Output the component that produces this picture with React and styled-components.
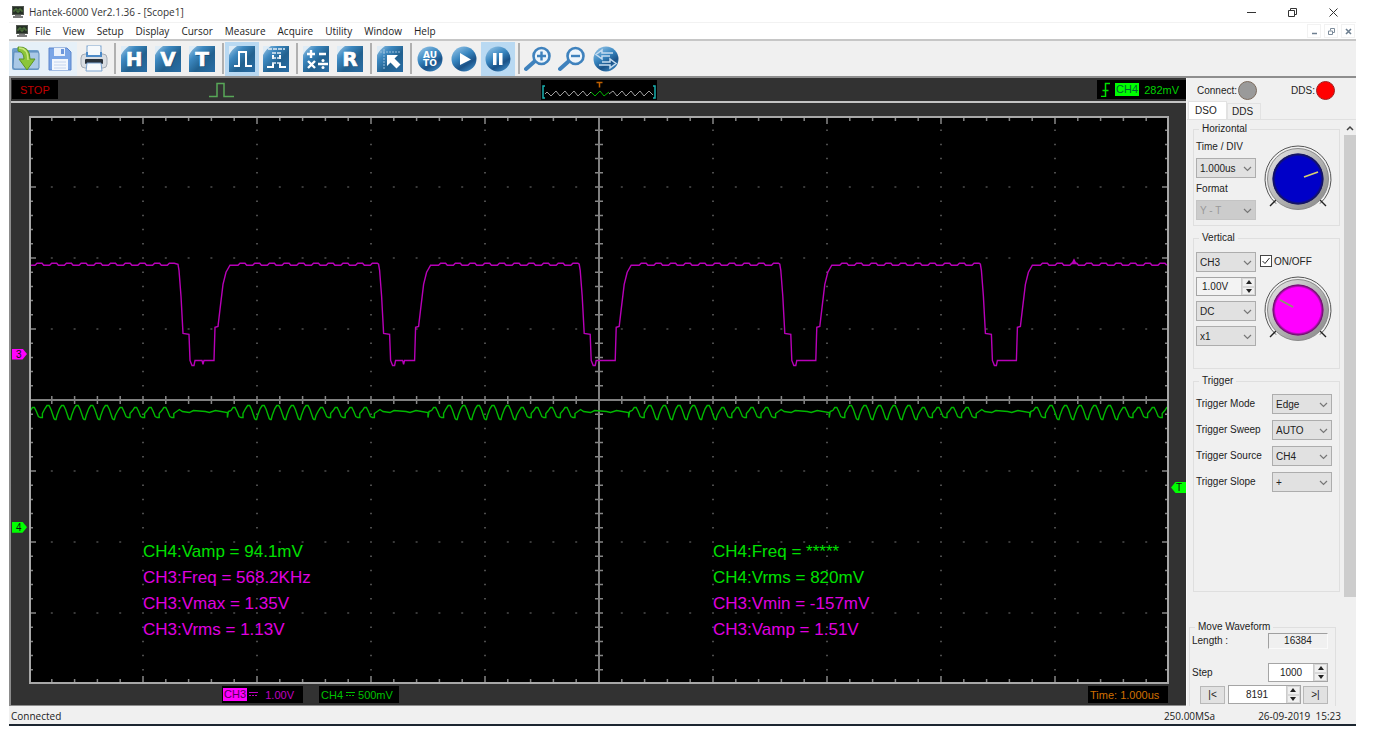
import React from "react";
import styled, { createGlobalStyle, css } from "styled-components";

const UI = '"Open Sans", "Noto Sans", sans-serif';
const ARIAL = '"Liberation Sans", Arial, sans-serif';

const Global = createGlobalStyle`
  *, *::before, *::after { box-sizing: border-box; }
  body { margin: 0; background: #fff; font-family: ${ARIAL}; font-size: 10px; color: #222; }
  button, input, select { font: inherit; color: inherit; margin: 0; padding: 0; }
`;

/* ---------- window frame ---------- */
const Page = styled.div`
  height: 100vh;
  min-height: 640px;
  padding: 0 17px 19px 9px;
`;
const Window = styled.div`
  display: flex;
  flex-direction: column;
  height: 100%;
  background: #f0f0f0;
  border-bottom: 2px solid #1c2630;
`;
const TitleBar = styled.header`
  display: flex;
  align-items: center;
  gap: 5px;
  height: 23px;
  padding: 2px 14px 0 3px;
  background: #fff;
  border-bottom: 1px solid #f2f2f2;
  font-family: ${UI};
`;
const Title = styled.h1`
  flex: 1;
  margin: 0;
  font-size: 10px;
  font-weight: 400;
  color: #333;
`;
const CaptionButtons = styled.div`
  display: flex;
  align-items: center;
  gap: ${(p) => p.$gap}px;
`;
const CaptionButton = styled.button`
  display: flex;
  align-items: center;
  justify-content: center;
  width: ${(p) => (p.$small ? 14 : 17)}px;
  height: ${(p) => (p.$small ? 14 : 17)}px;
  border: ${(p) => (p.$small ? "1px solid #f2f2f2" : "0")};
  background: none;
`;
const MenuBar = styled.nav`
  display: flex;
  align-items: center;
  height: 18px;
  padding: 0 1px 0 7px;
  background: #fff;
  border-bottom: 2px solid #c6c6c6;
  font-family: ${UI};
`;
const MenuList = styled.div`
  display: flex;
  flex: 1;
  gap: 12px;
  padding-left: 7px;
`;
const MenuItem = styled.a`
  color: #222;
  text-decoration: none;
  line-height: 14px;
`;

/* ---------- toolbar ---------- */
const Toolbar = styled.div`
  display: flex;
  align-items: center;
  height: 37px;
  border-bottom: 2px solid #8e8e8e;
  background: #f0f0f0;
`;
const ToolButton = styled.button`
  display: flex;
  align-items: center;
  justify-content: center;
  width: 34px;
  height: 34px;
  border: 0;
  background: ${(p) => (p.$active ? "#b9d9f2" : p.$hover ? "#e6f0f8" : "none")};
`;
const ToolSeparator = styled.div`
  width: 2px;
  height: 31px;
  margin: 0 1px 0 3px;
  background: #b0b0b0;
`;

/* ---------- scope ---------- */
const Workspace = styled.main`
  display: flex;
  flex: 1;
  min-height: 0;
`;
const Scope = styled.section`
  display: flex;
  flex-direction: column;
  flex: 1;
  min-width: 0;
  background: #323232;
  border-left: 2px solid #8c8c8c;
  border-bottom: 1px solid #8c8c8c;
`;
const ScopeTop = styled.div`
  display: grid;
  grid-template-columns: 1fr auto 1fr;
  align-items: center;
  height: 25px;
  border-bottom: 2px solid #c4c4c4;
`;
const TopLeft = styled.div`
  display: flex;
  align-items: center;
  gap: 150px;
  padding-left: 1px;
`;
const Chip = styled.div`
  display: flex;
  align-items: center;
  height: ${(p) => p.$h || 17}px;
  padding: ${(p) => p.$pad || "0 4px"};
  gap: ${(p) => p.$gap || 0}px;
  min-width: ${(p) => p.$w || 0}px;
  justify-self: end;
  background: #000;
  color: ${(p) => p.$color};
  font-size: 11px;
  white-space: nowrap;
`;
const ChannelTag = styled.span`
  padding: 0 1px;
  line-height: 13px;
  background: ${(p) => p.$bg};
  color: ${(p) => p.$fg};
`;
const ChipValue = styled.span`
  margin-left: auto;
  padding-right: ${(p) => p.$pad || 0}px;
`;
const PlotArea = styled.div`
  position: relative;
  flex: 1;
  min-height: 0;
  margin: 13px 17px 0 18px;
`;
const PlotSvg = styled.svg`
  display: block;
  position: absolute;
  inset: 0;
  width: 100%;
  height: 100%;
  background: #000;
`;
const PlotFrame = styled.div`
  position: absolute;
  inset: 0;
  border: 2px solid #a8a8a8;
`;
const Measurements = styled.div`
  position: absolute;
  left: 10%;
  bottom: 41px;
  width: 100%;
  display: grid;
  grid-template-columns: 50% 50%;
  font-size: 17px;
  line-height: 26px;
  pointer-events: none;
`;
const Measure = styled.div`
  color: ${(p) => (p.$ch === 3 ? "#e000e0" : "#00e000")};
  white-space: nowrap;
`;
const Marker = styled.div`
  position: absolute;
  top: ${(p) => p.$top};
  ${(p) => (p.$right ? css`right: -17px;` : css`left: -17px;`)}
  width: 15px;
  height: 11px;
  margin-top: -6px;
  padding: ${(p) => (p.$right ? "0 0 0 5px" : "0 0 0 4px")};
  background: ${(p) => p.$color};
  clip-path: ${(p) =>
    p.$right
      ? "polygon(30% 0, 100% 0, 100% 100%, 30% 100%, 0 50%)"
      : "polygon(0 0, 70% 0, 100% 50%, 70% 100%, 0 100%)"};
  color: #111;
  font-size: 10px;
  line-height: 11px;
`;
const ScopeBottom = styled.div`
  display: flex;
  align-items: center;
  gap: 16px;
  height: 21px;
  padding: 0 18px 0 211px;
`;
const Spacer = styled.div`
  flex: 1;
`;

/* ---------- side panel ---------- */
const Side = styled.aside`
  display: flex;
  flex-direction: column;
  width: 170px;
  flex: none;
  border-left: 1px solid #fafafa;
  overflow: hidden;
`;
const Lamps = styled.div`
  display: flex;
  align-items: center;
  justify-content: space-between;
  height: 23px;
  padding: 1px 21px 0 10px;
  flex: none;
`;
const LampLabel = styled.div`
  display: flex;
  align-items: center;
`;
const Lamp = styled.span`
  width: 19px;
  height: 19px;
  margin-left: 1px;
  border-radius: 50%;
  border: 1px solid ${(p) => p.$edge};
  background: ${(p) => p.$color};
`;
const Tabs = styled.div`
  display: flex;
  align-items: flex-end;
  height: 19px;
  padding-left: 1px;
  border-bottom: 1px solid #e0e0e0;
  flex: none;
`;
const Tab = styled.button`
  height: ${(p) => (p.$on ? 18 : 16)}px;
  width: ${(p) => (p.$on ? 39 : 34)}px;
  padding: 0 0 1px ${(p) => (p.$on ? 6 : 4)}px;
  text-align: left;
  border: 1px solid #e2e2e2;
  border-bottom: 0;
  background: ${(p) => (p.$on ? "#fff" : "#f0f0f0")};
`;
const SideBody = styled.div`
  display: flex;
  flex: 1;
  min-height: 0;
`;
const Panels = styled.div`
  flex: 1;
  min-width: 0;
  padding: 3px 4px 0 2px;
  overflow: hidden;
`;
const Group = styled.fieldset`
  min-width: 0;
  height: ${(p) => p.$h}px;
  margin: 0 ${(p) => (p.$flush ? 4 : 0)}px ${(p) => p.$mb || 6}px ${(p) => (p.$flush ? 0 : 4)}px;
  padding: 0 7px 0 2px;
  border: 1px solid #dfdfdf;
`;
const Legend = styled.legend`
  margin-left: 3px;
  padding: 0 3px;
  line-height: 12px;
`;
const Split = styled.div`
  display: flex;
  justify-content: space-between;
`;
const Stack = styled.div`
  display: flex;
  flex-direction: column;
  gap: ${(p) => p.$gap}px;
  padding-top: ${(p) => p.$top || 0}px;
`;
const Label = styled.label`
  line-height: 12px;
  white-space: nowrap;
`;
const SelectBox = styled.div`
  position: relative;
  width: 60px;
  height: 20px;
  color: ${(p) => (p.$off ? "#999" : "#222")};
  svg {
    position: absolute;
    right: 4px;
    top: 8px;
    pointer-events: none;
  }
`;
const NativeSelect = styled.select`
  appearance: none;
  width: 100%;
  height: 100%;
  padding: 0 14px 0 3px;
  border: 1px solid ${(p) => (p.disabled ? "#c4c4c4" : "#adadad")};
  border-radius: 0;
  background: ${(p) => (p.disabled ? "#cccccc" : "#e1e1e1")};
  color: inherit;
  opacity: 1;
`;
const SpinBox = styled.div`
  display: flex;
  width: ${(p) => p.$w}px;
  height: 19px;
  border: 1px solid #a5a5a5;
  background: ${(p) => (p.$grey ? "#f3f3f3" : "#fff")};
`;
const SpinInput = styled.input`
  flex: 1;
  min-width: 0;
  border: 0;
  padding: 0 5px;
  background: none;
  text-align: ${(p) => p.$align || "left"};
`;
const SpinArrows = styled.div`
  display: flex;
  flex-direction: column;
  width: 14px;
  border-left: 1px solid #ccc;
`;
const SpinArrow = styled.button`
  display: flex;
  align-items: center;
  justify-content: center;
  flex: 1;
  border: 1px solid #d8d8d8;
  background: #f0f0f0;
`;
const CheckLabel = styled.label`
  display: flex;
  align-items: center;
  gap: 2px;
  white-space: nowrap;
`;
const Check = styled.input`
  appearance: none;
  width: 12px;
  height: 12px;
  border: 1px solid #444;
  background: #fff;
`;
const CheckWrap = styled.span`
  position: relative;
  display: flex;
  svg {
    position: absolute;
    left: 1px;
    top: 1px;
    pointer-events: none;
  }
`;
const KnobColumn = styled.div`
  display: flex;
  flex-direction: column;
  width: 72px;
  padding-top: ${(p) => p.$top}px;
  gap: 9px;
`;
const KnobSvg = styled.svg`
  align-self: flex-end;
  width: 68px;
  height: 68px;
`;
const FieldRow = styled.div`
  display: flex;
  align-items: center;
  justify-content: space-between;
`;
const Readout = styled.output`
  width: 60px;
  height: 16px;
  border: 1px solid #fafafa;
  border-top-color: #a0a0a0;
  border-left-color: #a0a0a0;
  line-height: 14px;
  text-align: center;
`;
const StepButton = styled.button`
  width: 25px;
  height: 18px;
  border: 1px solid #b8b8b8;
  background: #e1e1e1;
`;
const Nudge = styled.div`
  display: flex;
  align-items: center;
  justify-content: space-between;
  padding-left: 8px;
`;
const ScrollTrack = styled.div`
  display: flex;
  flex-direction: column;
  width: 12px;
  padding-top: 1px;
`;
const ScrollArrow = styled.button`
  display: flex;
  align-items: center;
  justify-content: center;
  height: 14px;
  border: 0;
  background: none;
`;
const ScrollThumb = styled.div`
  height: 79%;
  background: #cdcdcd;
`;

/* ---------- status bar ---------- */
const StatusBar = styled.footer`
  display: flex;
  align-items: center;
  height: 18px;
  padding: 2px 15px 0 2px;
  font-family: ${UI};
`;
const StatusText = styled.span`
  white-space: nowrap;
`;
const StatusRight = styled.div`
  display: flex;
  gap: 43px;
  margin-left: auto;
`;

/* ---------- icons ---------- */
const AppIcon = () => (
  <svg width="12" height="12" viewBox="0 0 12 12">
    <rect x="0" y="0" width="12" height="9" fill="#50554f" />
    <rect x="1" y="1" width="10" height="7" fill="#263026" />
    <path d="M1 5h2V3h2v3h2V3h2v2h2" stroke="#55803f" fill="none" />
    <path d="M3 9h6v1h2v2H1v-2h2z" fill="#7d7d7d" />
  </svg>
);

const Tile = ({ children }) => (
  <svg width="28" height="28" viewBox="0 0 28 28">
    <defs>
      <linearGradient id="tile" x1="0" y1="0" x2="1" y2="1">
        <stop offset="0" stopColor="#a5cbe6" />
        <stop offset=".3" stopColor="#3d88c0" />
        <stop offset=".6" stopColor="#22618f" />
        <stop offset="1" stopColor="#2a6ea6" />
      </linearGradient>
    </defs>
    <rect x="1" y="1" width="26" height="26" fill="url(#tile)" />
    <path d="M1 1h8C6 3 3 6 1 10z" fill="#dfecf6" />
    {children}
  </svg>
);
const TileLetter = ({ ch }) => (
  <Tile>
    <text x="15" y="22" textAnchor="middle" fontFamily="DejaVu Sans, sans-serif" fontWeight="700" fontSize="20" fill="#0d2c48" opacity=".5">{ch}</text>
    <text x="14" y="21" textAnchor="middle" fontFamily="DejaVu Sans, sans-serif" fontWeight="700" fontSize="20" fill="#fff" stroke="#fff" strokeWidth=".6">{ch}</text>
  </Tile>
);
const Ball = ({ children }) => (
  <svg width="28" height="28" viewBox="0 0 28 28">
    <defs>
      <linearGradient id="ball" x1=".2" y1="0" x2=".8" y2="1">
        <stop offset="0" stopColor="#8fc0e4" />
        <stop offset=".4" stopColor="#3886c0" />
        <stop offset=".7" stopColor="#1a5288" />
        <stop offset="1" stopColor="#3f8cc6" />
      </linearGradient>
    </defs>
    <circle cx="14" cy="14" r="12.5" fill="url(#ball)" />
    {children}
  </svg>
);
const OpenIcon = () => (
  <svg width="30" height="28" viewBox="0 0 30 28">
    <path d="M1 5q0-2 2-2h7l2 2h14q2 0 2 2v17q0 1-2 1H3q-2 0-2-2z" fill="#6f9fcb" />
    <path d="M3 7h24q1 0 1 2v14q0 1-2 1H4q-2 0-2-2z" fill="#a9c8e6" stroke="#5a8abb" />
    <path d="M7 2q12-1 12 12h5l-8 11-8-11h5q0-7-6-8z" fill="#8bc53a" stroke="#5b9426" />
    <path d="M8 3q9 0 9 12" fill="none" stroke="#c9e77d" strokeWidth="1.500" />
  </svg>
);
const SaveIcon = () => (
  <svg width="26" height="26" viewBox="0 0 26 26">
    <path d="M2 2h18l4 4v18H2z" fill="#7aa5e6" stroke="#5c86cc" />
    <rect x="7" y="2" width="11" height="8" fill="#e9f1fc" />
    <rect x="14" y="3" width="3" height="5" fill="#6d97dc" />
    <rect x="5" y="13" width="16" height="11" fill="#f3f7fd" />
    <path d="M7 16h12M7 19h12M7 22h12" stroke="#c4d4ee" />
  </svg>
);
const PrintIcon = () => (
  <svg width="28" height="28" viewBox="0 0 28 28">
    <rect x="7" y="1" width="14" height="11" fill="#fff" stroke="#7ba3cf" />
    <rect x="1" y="9" width="26" height="14" rx="4" fill="#d9dde2" stroke="#a3abb5" />
    <path d="M6 7h16v5H6z" fill="#4e8bc8" />
    <path d="M8 1h12v9H8z" fill="#f6f9fc" />
    <rect x="5" y="14" width="18" height="5" rx="1" fill="#2b333c" />
    <path d="M7 18h14l1 8H6z" fill="#f8fafc" stroke="#7ba3cf" />
  </svg>
);
const LensIcon = ({ plus }) => (
  <svg width="28" height="28" viewBox="0 0 28 28">
    <path d="M2 24l9-8" stroke="#3f82bd" strokeWidth="4" strokeLinecap="round" />
    <circle cx="17.5" cy="11" r="8" fill="#eef5fb" stroke="#3f82bd" strokeWidth="2.600" />
    <path d={plus ? "M13 11h9M17.500 6.500v9" : "M13 11h9"} stroke="#3f82bd" strokeWidth="2.400" />
  </svg>
);
const Chevron = () => (
  <svg width="9" height="6" viewBox="0 0 9 6">
    <path d="M1 1l3.500 3.500L8 1" fill="none" stroke="#777" strokeWidth="1.200" />
  </svg>
);
const SpinTriangle = ({ down }) => (
  <svg width="6" height="4" viewBox="0 0 6 4">
    <path d={down ? "M0 0h6L3 4z" : "M0 4h6L3 0z"} fill="#222" />
  </svg>
);

const TOOLS = [
  [
    ["Open", <OpenIcon />, "hover"],
    ["Save", <SaveIcon />, "hover"],
    ["Print", <PrintIcon />],
  ],
  [
    ["Horizontal", <TileLetter ch="H" />],
    ["Vertical", <TileLetter ch="V" />],
    ["Trigger", <TileLetter ch="T" />],
  ],
  [
    ["Pulse", <Tile><path d="M6 21h5V7h7v14h6" fill="none" stroke="#fff" strokeWidth="2" /></Tile>, "active"],
    ["Persist", <Tile><path d="M5 22h6v-4M11 14v-4M18 10v4M18 18v4h6" fill="none" stroke="#fff" strokeWidth="2" /><path d="M6 4h17M10 8h9M10 13h9M10 18h9" stroke="#e3eef7" strokeWidth="1.500" strokeDasharray="4 1" /></Tile>],
  ],
  [
    ["Math", <Tile><path d="M5 9h8M9 5v8M17 9h7M6 16l7 7M13 16l-7 7M16 19h10" stroke="#fff" strokeWidth="2.400" /><circle cx="21" cy="15.500" r="1.500" fill="#fff" /><circle cx="21" cy="22.500" r="1.500" fill="#fff" /></Tile>],
    ["Reference", <TileLetter ch="R" />],
  ],
  [["Cursor", <Tile><path d="M4 7h20M8 4v20" stroke="#9cc1de" strokeDasharray="2 1" /><path d="M11 10h11l-3.500 3.500 6 6-4 4-6-6L11 21z" fill="#fff" /></Tile>]],
  [
    ["Auto", <Ball><g fontFamily="DejaVu Sans, sans-serif" fontWeight="700" fontSize="9" fill="#fff" textAnchor="middle"><text x="14" y="13">AU</text><text x="14" y="21">TO</text></g></Ball>],
    ["Run", <Ball><path d="M10 8l11 6.500L10 20z" fill="#fff" /></Ball>],
    ["Pause", <Ball><path d="M9 8h3.500v12H9zM15 8h3.500v12H15z" fill="#fff" /></Ball>, "active"],
  ],
  [
    ["Zoom in", <LensIcon plus />],
    ["Zoom out", <LensIcon />],
    ["Swap", <Ball><path d="M21 8H10V5l-6 4.500L10 14v-3h8M7 20h11v3l6-4.500-6-4.500v3H10" fill="none" stroke="#c5dcf0" strokeWidth="1.500" /></Ball>],
  ],
];

/* ---------- plot data, in a 1140 x 567 space ---------- */
const W = 1140;
const H = 567;
const PERIOD = 200.6;
const DROP = [[0, 148], [1, 154], [3, 180], [5, 217], [11, 218], [12, 244], [14, 249], [16, 249], [17, 244], [36, 244], [37, 211], [40, 210], [42, 193], [45, 168], [48, 156], [52, 149]];

function channel3() {
  const pts = [];
  const ripple = (from, to) => {
    for (let x = from; x + 2 < to; x += 14.7) {
      pts.push([x, 149], [x + 6, 149], [x + 8, 147]);
      if (x + 14 < to) pts.push([x + 13, 147]);
    }
  };
  ripple(0, 149);
  for (let i = 0; i < 5; i++) {
    const x0 = 149 + i * PERIOD;
    DROP.forEach(([dx, y]) => {
      pts.push([x0 + dx, y]);
      if (dx === 17 && i < 2) pts.push([x0 + 24, 244], [x0 + 25, 248], [x0 + 26, 244]);
    });
    ripple(x0 + 54, Math.min(x0 + PERIOD, W));
  }
  return pts.filter(([x]) => x <= W).map(([x, y]) => `${x.toFixed(1)},${y}`).join(" ");
}

function channel4() {
  const pts = [];
  for (let i = -1; i < 5; i++) {
    const start = 205 + i * PERIOD;
    for (let k = 0; k < 10; k++) {
      const x = start + k * 14.6;
      const big = k > 0 && k < 6;
      const top = big ? 289 : 291;
      const low = big ? 303 : 301;
      const flat = big ? 1 : 2;
      pts.push([x - 3, top + 3], [x - 1, top], [x + 1, top], [x + 3, top + 4], [x + 7 - flat, low - 1], [x + 7, low], [x + 7 + flat, low], [x + 9, low - 4]);
    }
    const f = start + 144;
    pts.push([f + 2, 293], [f + 5, 295], [f + 12, 296], [f + 16, 294], [f + 28, 295], [f + 32, 296], [f + 38, 294], [f + 50, 296], [f + 50, 301], [f + 51, 295]);
  }
  return pts.filter(([x]) => x >= 0 && x <= W).map(([x, y]) => `${x.toFixed(1)},${y}`).join(" ");
}

function Graticule() {
  const dots = [];
  const ticks = [];
  const dx = W / 50;
  const dy = H / 40;
  for (let i = 1; i < 50; i++) {
    const x = i * dx;
    const major = i % 5 === 0 ? 8 : 5;
    ticks.push(`M${x} 0v${major}M${x} ${H}v${-major}M${x} ${H / 2 - 4}v8`);
    for (let r = 1; r < 8; r++) if (r !== 4) dots.push(`M${x - 1} ${(r * H) / 8}h2`);
  }
  for (let j = 1; j < 40; j++) {
    const y = j * dy;
    const major = j % 5 === 0 ? 7 : 4;
    ticks.push(`M0 ${y}h${major}M${W} ${y}h${-major}M${W / 2 - 4} ${y}h8`);
    for (let c = 1; c < 10; c++) if (c !== 5) dots.push(`M${(c * W) / 10 - 1} ${y}h2`);
  }
  return (
    <g fill="none">
      <path d={dots.join("")} stroke="#4c4c4c" strokeWidth="1.500" />
      <path d={ticks.join("")} stroke="#868686" strokeWidth="1.500" />
      <path d={`M0 ${H / 2}H${W}M${W / 2} 0V${H}`} stroke="#808080" strokeWidth="2" />
    </g>
  );
}

const MEASURES = [
  [4, "CH4:Vamp = 94.1mV"], [4, "CH4:Freq = *****"],
  [3, "CH3:Freq = 568.2KHz"], [4, "CH4:Vrms = 820mV"],
  [3, "CH3:Vmax = 1.35V"], [3, "CH3:Vmin = -157mV"],
  [3, "CH3:Vrms = 1.13V"], [3, "CH3:Vamp = 1.51V"],
];

/* ---------- controls ---------- */
function Select({ id, value, disabled, label }) {
  return (
    <SelectBox $off={disabled}>
      <NativeSelect id={id} aria-label={label} disabled={disabled} defaultValue={value}>
        <option>{value}</option>
      </NativeSelect>
      <Chevron />
    </SelectBox>
  );
}
function Spin({ id, value, w, grey, align, label }) {
  return (
    <SpinBox $w={w} $grey={grey}>
      <SpinInput id={id} aria-label={label} defaultValue={value} $align={align} />
      <SpinArrows>
        <SpinArrow aria-label="Increase"><SpinTriangle /></SpinArrow>
        <SpinArrow aria-label="Decrease"><SpinTriangle down /></SpinArrow>
      </SpinArrows>
    </SpinBox>
  );
}
function Knob({ color, hand, stroke }) {
  const id = "knob" + color.slice(1);
  return (
    <KnobSvg viewBox="0 0 68 68">
      <defs>
        <linearGradient id={id} x1="0" y1="0" x2="1" y2="1">
          <stop offset="0" stopColor="#e8e8e8" />
          <stop offset=".5" stopColor="#b4b4b4" />
          <stop offset="1" stopColor="#858585" />
        </linearGradient>
        <radialGradient id={id + "f"}>
          <stop offset=".88" stopColor={color} />
          <stop offset="1" stopColor="#222" stopOpacity=".8" />
        </radialGradient>
      </defs>
      <path d="M12 58.600A33 33 0 1 1 56 58.600" fill="none" stroke="#555" />
      <path d="M12 55L6 61M56 55l6 6" stroke="#222" strokeWidth="1.400" />
      <circle cx="34" cy="34" r="30.500" fill={`url(#${id})`} stroke="#8a8a8a" />
      <circle cx="34" cy="34" r="25.500" fill={color} />
      <circle cx="34" cy="34" r="25.500" fill={`url(#${id}f)`} />
      <path d={hand} stroke={stroke} strokeWidth="1.800" />
    </KnobSvg>
  );
}

const MENUS = ["File", "View", "Setup", "Display", "Cursor", "Measure", "Acquire", "Utility", "Window", "Help"];
const TRIGGERS = [["Mode", "Edge"], ["Sweep", "AUTO"], ["Source", "CH4"], ["Slope", "+"]];

export default function App() {
  return (
    <Page>
      <Global />
      <Window>
        <TitleBar>
          <AppIcon />
          <Title>Hantek-6000 Ver2.1.36 - [Scope1]</Title>
          <CaptionButtons $gap={24}>
            <CaptionButton aria-label="Minimize"><svg width="9" height="9"><path d="M0 4.500h9" stroke="#333" /></svg></CaptionButton>
            <CaptionButton aria-label="Restore"><svg width="9" height="9"><path d="M.5 2.500h6v6h-6zM2.500 2V.5h6v6H7" fill="none" stroke="#333" /></svg></CaptionButton>
            <CaptionButton aria-label="Close"><svg width="9" height="9"><path d="M.5.5l8 8M8.500.5l-8 8" stroke="#333" /></svg></CaptionButton>
          </CaptionButtons>
        </TitleBar>
        <MenuBar>
          <AppIcon />
          <MenuList>
            {MENUS.map((m) => <MenuItem key={m} href="#">{m}</MenuItem>)}
          </MenuList>
          <CaptionButtons $gap={3}>
            <CaptionButton $small aria-label="Minimize scope"><svg width="7" height="7"><path d="M1 5.500h5" stroke="#6d7f90" strokeWidth="1.500" /></svg></CaptionButton>
            <CaptionButton $small aria-label="Restore scope"><svg width="7" height="7"><path d="M.5 3h4v3.500h-4zM2.500 2.500v-2h4v4h-2" fill="none" stroke="#7d8c9b" /></svg></CaptionButton>
            <CaptionButton $small aria-label="Close scope"><svg width="7" height="7"><path d="M1 1l5 5M6 1L1 6" stroke="#6d7f90" strokeWidth="1.600" /></svg></CaptionButton>
          </CaptionButtons>
        </MenuBar>
        <Toolbar role="toolbar">
          {TOOLS.map((group, g) => (
            <React.Fragment key={g}>
              {g > 0 && <ToolSeparator />}
              {group.map(([name, icon, state]) => (
                <ToolButton key={name} aria-label={name} $active={state === "active"} $hover={state === "hover"}>{icon}</ToolButton>
              ))}
            </React.Fragment>
          ))}
        </Toolbar>

        <Workspace>
          <Scope>
            <ScopeTop>
              <TopLeft>
                <Chip $h={19} $w={44} $pad="0 8px" $color="#c00000">STOP</Chip>
                <svg width="27" height="16"><path d="M1 14.500h8V1.500h7v13h10" fill="none" stroke="#58a858" strokeWidth="1.500" /></svg>
              </TopLeft>
              <Chip $h={20} $pad="0 1px" $color="#c60">
                <svg width="114" height="20">
                  <path d="M3 6H1v12h2M111 6h2v12h-2" fill="none" stroke="#1ab0b0" strokeWidth="1.500" />
                  <path d="M3 14l2-2 4 4 5-5 4 5 5-5 4 5 5-5 4 5 5-5 4 5 4-4M67 14l4-3 4 5 5-5 4 5 5-5 4 5 5-5 4 5 5-5 4 4" fill="none" stroke="#a0a0a0" />
                  <path d="M49 12l4 4 5-5 4 5 5-4" fill="none" stroke="#00b000" />
                  <path d="M54.500 2.500h6M57.500 2.500v5" stroke="#c06000" strokeWidth="1.500" />
                </svg>
              </Chip>
              <Chip $h={19} $w={89} $pad="0 7px 0 4px" $gap={5} $color="#00d000">
                <svg width="9" height="15"><path d="M0 14.500h4.500V1.500H9M1.500 8.500h6" fill="none" stroke="#00e000" strokeWidth="1.500" /></svg>
                <ChannelTag $bg="#00ff00" $fg="#063">CH4</ChannelTag>
                <ChipValue>282mV</ChipValue>
              </Chip>
            </ScopeTop>
            <PlotArea>
              <PlotSvg viewBox={`0 0 ${W} ${H}`} preserveAspectRatio="none">
                <Graticule />
                <polyline points={channel3()} fill="none" stroke="#b800b8" strokeWidth="1.400" />
                <path d="M1042 148l3-6 3 6z" fill="#b800b8" />
                <polyline points={channel4()} fill="none" stroke="#00b800" strokeWidth="1.400" />
              </PlotSvg>
              <PlotFrame />
              <Measurements>
                {MEASURES.map(([ch, text]) => <Measure key={text} $ch={ch}>{text}</Measure>)}
              </Measurements>
              <Marker $top="42%" $color="#ff00ff">3</Marker>
              <Marker $top="72.5%" $color="#00ff00">4</Marker>
              <Marker $top="65.5%" $color="#00ff00" $right>T</Marker>
            </PlotArea>
            <ScopeBottom>
              <Chip $w={81} $pad="0 1px" $gap={2} $color="#c000c0">
                <ChannelTag $bg="#ff00ff" $fg="#505">CH3</ChannelTag>
                <svg width="9" height="5"><path d="M0 .5h9" stroke="#c000c0" /><path d="M0 3.500h9" stroke="#c000c0" strokeDasharray="2 1" /></svg>
                <ChipValue $pad={8}>1.00V</ChipValue>
              </Chip>
              <Chip $w={80} $pad="0 2px" $gap={3} $color="#00c000">
                CH4
                <svg width="9" height="5"><path d="M0 .5h9" stroke="#00c000" /><path d="M0 3.500h9" stroke="#00c000" strokeDasharray="2 1" /></svg>
                500mV
              </Chip>
              <Spacer />
              <Chip $w={80} $pad="0 2px" $color="#d07000">Time: 1.000us</Chip>
            </ScopeBottom>
          </Scope>

          <Side>
            <Lamps>
              <LampLabel>Connect: <Lamp $color="#9a9a9a" $edge="#7b6a5c" /></LampLabel>
              <LampLabel>DDS: <Lamp $color="#ff0000" $edge="#a02020" /></LampLabel>
            </Lamps>
            <Tabs role="tablist">
              <Tab role="tab" aria-selected="true" $on>DSO</Tab>
              <Tab role="tab" aria-selected="false">DDS</Tab>
            </Tabs>
            <SideBody>
              <Panels>
                <Group $h={103}>
                  <Legend>Horizontal</Legend>
                  <Split>
                    <Stack $gap={5} $top={6}>
                      <Label htmlFor="timediv">Time / DIV</Label>
                      <Select id="timediv" value="1.000us" />
                      <Label htmlFor="format">Format</Label>
                      <Select id="format" value="Y - T" disabled />
                    </Stack>
                    <KnobColumn $top={10}>
                      <Knob color="#0000c8" hand="M40 32l14-5" stroke="#d8d070" />
                    </KnobColumn>
                  </Split>
                </Group>
                <Group $h={137}>
                  <Legend>Vertical</Legend>
                  <Split>
                    <Stack $gap={5} $top={8}>
                      <Select label="Channel" value="CH3" />
                      <Spin label="Volts per division" value="1.00V" w={60} grey />
                      <Select label="Coupling" value="DC" />
                      <Select label="Probe" value="x1" />
                    </Stack>
                    <KnobColumn $top={11}>
                      <CheckLabel>
                        <CheckWrap>
                          <Check type="checkbox" defaultChecked />
                          <svg width="10" height="10"><path d="M1.500 5l2.500 2.500L8.500 2" fill="none" stroke="#222" /></svg>
                        </CheckWrap>
                        ON/OFF
                      </CheckLabel>
                      <Knob color="#ff00ff" hand="M16 24l13 7" stroke="#8a9a6a" />
                    </KnobColumn>
                  </Split>
                </Group>
                <Group $h={217} $mb={29}>
                  <Legend>Trigger</Legend>
                  <Stack $gap={6} $top={7}>
                    {TRIGGERS.map(([name, value]) => (
                      <FieldRow key={name}>
                        <Label htmlFor={"trg" + name}>Trigger {name}</Label>
                        <Select id={"trg" + name} value={value} />
                      </FieldRow>
                    ))}
                  </Stack>
                </Group>
                <Group $h={100} $flush>
                  <Legend>Move Waveform</Legend>
                  <FieldRow>
                    <Label htmlFor="length">Length :</Label>
                    <Readout id="length">16384</Readout>
                  </FieldRow>
                  <Stack $gap={3} $top={14}>
                    <FieldRow>
                      <Label htmlFor="step">Step</Label>
                      <Spin id="step" value="1000" w={60} align="center" />
                    </FieldRow>
                    <Nudge>
                      <StepButton aria-label="Step back">|&lt;</StepButton>
                      <Spin label="Position" value="8191" w={73} align="center" />
                      <StepButton aria-label="Step forward">&gt;|</StepButton>
                    </Nudge>
                  </Stack>
                </Group>
              </Panels>
              <ScrollTrack>
                <ScrollArrow aria-label="Scroll up"><svg width="8" height="6"><path d="M1 5l3-3 3 3" fill="none" stroke="#444" strokeWidth="1.500" /></svg></ScrollArrow>
                <ScrollThumb />
              </ScrollTrack>
            </SideBody>
          </Side>
        </Workspace>

        <StatusBar>
          <StatusText>Connected</StatusText>
          <StatusRight>
            <StatusText>250.00MSa</StatusText>
            <StatusText>26-09-2019&nbsp; 15:23</StatusText>
          </StatusRight>
        </StatusBar>
      </Window>
    </Page>
  );
}
